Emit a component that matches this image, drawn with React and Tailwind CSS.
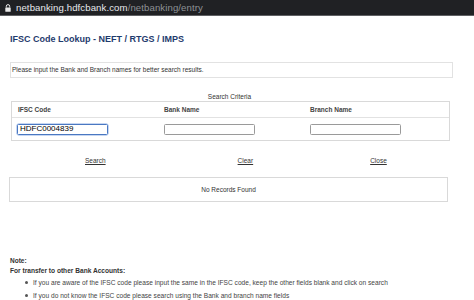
import React from "react";

export default function App() {
  return (
    <div className="w-[474px] h-[300px] bg-white overflow-hidden" style={{ fontFamily: '"Liberation Sans", Arial, sans-serif' }}>
      <div className="h-[16px] bg-[#202124] border-b border-[#5f6063] flex items-center pl-[5px]">
        <svg width="6" height="8" viewBox="0 0 6 8" className="mr-[5px]">
          <path d="M1.3 3.5V2.3a1.7 1.7 0 0 1 3.4 0v1.2" fill="none" stroke="#e8e8e8" strokeWidth="1" />
          <rect x="0.3" y="3.4" width="5.4" height="4.4" rx="0.6" fill="#e8e8e8" />
        </svg>
        <span className="text-[9.6px] tracking-[0.1px] text-[#e8eaed] leading-none">netbanking.hdfcbank.com<span className="text-[#8e9196]">/netbanking/entry</span></span>
      </div>
      <div className="pl-[10px]">
        <div className="pt-[17px] text-[9px] font-bold text-[#1f3b6d] leading-[12px]">IFSC Code Lookup - NEFT / RTGS / IMPS</div>
        <div className="mt-[17px] w-[443px] h-[16px] border border-[#e2e2e2] flex items-center pl-[1px] text-[6.5px] text-[#333]">
          Please input the Bank and Branch names for better search results.
        </div>
        <div className="mt-[15px] w-[439px] text-center text-[6.5px] text-[#333] leading-[8px]">Search Criteria</div>
        <div className="ml-[1px] w-[439px] border border-[#d9d9d9]">
          <div className="h-[16px] border-b border-[#e2e2e2] flex items-center text-[6.5px] font-bold text-[#444]">
            <div className="w-[152px] pl-[6px]">IFSC Code</div>
            <div className="w-[146px]">Bank Name</div>
            <div>Branch Name</div>
          </div>
          <div className="h-[22px] flex items-center">
            <div className="w-[152px] pl-[5px]">
              <div className="w-[91px] h-[11px] border border-[#4a78c2] rounded-[1.5px] shadow-[0_0_0_0.5px_#8fb0e6] flex items-center pl-[2px] text-[8px] text-black leading-none">HDFC0004839</div>
            </div>
            <div className="w-[146px]">
              <div className="w-[91px] h-[11px] border border-[#9a9a9a] rounded-[1.5px]"></div>
            </div>
            <div>
              <div className="w-[91px] h-[11px] border border-[#9a9a9a] rounded-[1.5px]"></div>
            </div>
          </div>
        </div>
        <div className="h-[36px] pt-[4px] flex items-center text-[6.5px] text-[#333] underline">
          <span className="ml-[75px]">Search</span>
          <span className="ml-[132px]">Clear</span>
          <span className="ml-[117px]">Close</span>
        </div>
        <div className="-ml-[1px] w-[439px] h-[25px] border border-[#d9d9d9] flex items-center justify-center text-[6.5px] text-[#333]">
          No Records Found
        </div>
        <div className="mt-[54px] text-[6.5px] font-bold text-[#333] leading-[10px]">Note:</div>
        <div className="text-[6.6px] font-bold text-[#333] leading-[10px]">For transfer to other Bank Accounts:</div>
        <ul className="pl-[15px] text-[6.6px] text-[#444]">
          <li className="flex items-center h-[13px]"><span className="w-[3px] h-[3px] rounded-full bg-[#555] mr-[5px]"></span>If you are aware of the IFSC code please input the same in the IFSC code, keep the other fields blank and click on search</li>
          <li className="flex items-center h-[13px]"><span className="w-[3px] h-[3px] rounded-full bg-[#555] mr-[5px]"></span>If you do not know the IFSC code please search using the Bank and branch name fields</li>
        </ul>
      </div>
    </div>
  );
}
